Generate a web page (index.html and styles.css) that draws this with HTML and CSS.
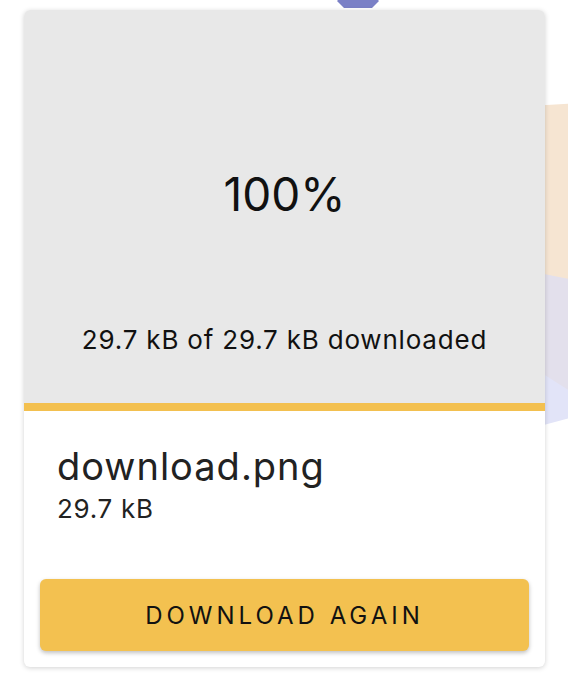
FILE: index.html
```html
<!DOCTYPE html>
<html lang="en">
<head>
    <meta charset="UTF-8">
    <meta name="viewport" content="width=device-width, initial-scale=1.0">
    <title>Download</title>
    <link rel="stylesheet" href="styles.css">
</head>
<body>

    <svg class="backdrop" width="568" height="700" viewBox="0 0 568 700">
        <polygon points="344,-6 372,-6 379,1 372,8 344,8 337,1" fill="#7a80c6"/>
        <path d="M440 112 Q520 106 600 102 L600 290 Q560 272 440 262 Z" fill="#f6e5d2"/>
        <path d="M440 262 Q520 266 600 286 L600 400 L440 400 Z" fill="#e3e0ec"/>
        <path d="M540 372 L600 410 L540 426 Z" fill="#e2e4f8"/>
    </svg>

    <div class="card">
        <div class="progress">
            <div class="percent">100%</div>
            <div class="status">29.7 kB of 29.7 kB downloaded</div>
        </div>
        <div class="bar"></div>
        <div class="info">
            <div class="name">download.png</div>
            <div class="size">29.7 kB</div>
            <button type="button" class="btn">Download again</button>
        </div>
    </div>

</body>
</html>
```

FILE: styles.css
```css
body {
    margin: 0;
    background-color: white;
    font-family: Inter, Lato, sans-serif;
    color: #222;
    height: 700px;
    overflow: hidden;
    position: relative;
}

.backdrop {
    position: absolute;
    top: 0;
    left: 0;
}

.card {
    position: relative;
    margin: 10px 0 0 24px;
    width: 521px;
    border-radius: 6px;
    overflow: hidden;
    background-color: white;
    box-shadow: 0 1px 5px rgba(0, 0, 0, 0.18);
}

.progress {
    background-color: #e8e8e8;
    height: 393px;
    display: flex;
    flex-direction: column;
    align-items: center;
    box-sizing: border-box;
    padding-top: 156px;
}

.percent {
    font-size: 46px;
    line-height: 56px;
    color: #111;
}

.status {
    margin-top: 103px;
    font-size: 26px;
    line-height: 30px;
    letter-spacing: 0.8px;
    color: #111;
}

.bar {
    height: 8px;
    background-color: #f3c04f;
}

.info {
    padding: 33px 16px 16px 16px;
    display: flex;
    flex-direction: column;
}

.name {
    padding-left: 17px;
    font-size: 38px;
    line-height: 44px;
    letter-spacing: 1px;
}

.size {
    margin-top: 6px;
    padding-left: 17px;
    font-size: 26px;
    line-height: 30px;
    letter-spacing: 0.7px;
}

.btn {
    margin-top: 55px;
    height: 72px;
    border: none;
    border-radius: 6px;
    background-color: #f3c150;
    font-family: inherit;
    font-size: 24px;
    letter-spacing: 4px;
    text-transform: uppercase;
    color: #111;
    box-shadow: 0 2px 4px rgba(0, 0, 0, 0.25);
    cursor: pointer;
}
```
